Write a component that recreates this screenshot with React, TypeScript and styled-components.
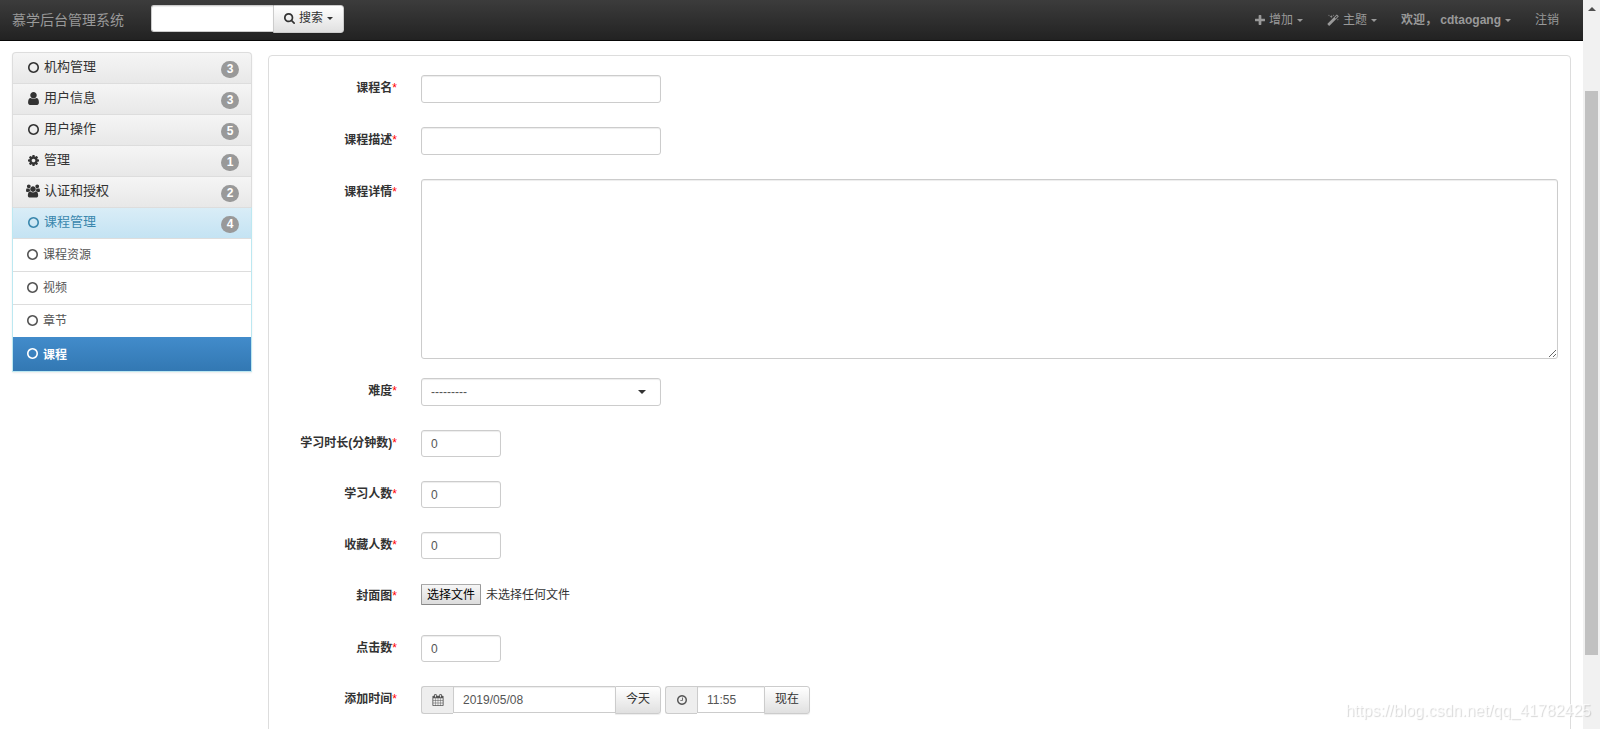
import React, { useId, useRef, useState } from "react";
import styled, { createGlobalStyle, css } from "styled-components";

const GlobalStyle = createGlobalStyle`
  *, *::before, *::after { box-sizing: border-box; }
  body {
    margin: 0;
    background: #fff;
    color: #333;
    font-family: "Liberation Sans", Arial, "Noto Sans CJK SC", sans-serif;
    font-size: 12px;
    line-height: 16px;
  }
  button, input, select, textarea { font: inherit; color: inherit; margin: 0; }
  a { color: inherit; text-decoration: none; }
`;

/* ---------- icons ---------- */

type IconName = "search" | "circle" | "user" | "cog" | "group" | "plus" | "magic" | "calendar" | "clock";

const icons: Record<IconName, { box: string; path: string }> = {
  search: {
    box: "64 128 1664 1664",
    path: "M1216 832q0-185-131.500-316.500t-316.500-131.500-316.500 131.500-131.500 316.500 131.500 316.500 316.500 131.500 316.500-131.500 131.500-316.500zm512 832q0 52-38 90t-90 38q-54 0-90-38l-343-342q-179 124-399 124-143 0-273.500-55.500t-225-150-150-225-55.500-273.500 55.500-273.500 150-225 225-150 273.500-55.500 273.500 55.500 225 150 150 225 55.500 273.500q0 220-124 399l343 343q37 37 37 90z",
  },
  circle: {
    box: "128 128 1536 1536",
    path: "M896 352q-148 0-273 73t-198 198-73 273 73 273 198 198 273 73 273-73 198-198 73-273-73-273-198-198-273-73zm768 544q0 209-103 385.500t-279.500 279.500-385.500 103-385.500-103-279.500-279.500-103-385.500 103-385.500 279.500-279.500 385.500-103 385.500 103 279.500 279.500 103 385.500z",
  },
  user: {
    box: "128 128 1536 1536",
    path: "M1536 1399q0 109-62.500 187t-150.500 78h-854q-88 0-150.500-78t-62.500-187q0-85 8.500-160.500t31.500-152 58.500-131 94-89 134.500-34.500q131 128 313 128t313-128q76 0 134.500 34.500t94 89 58.500 131 31.500 152 8.500 160.500zm-256-887q0 159-112.500 271.500t-271.500 112.500-271.500-112.500-112.500-271.500 112.500-271.500 271.500-112.500 271.500 112.500 112.500 271.500z",
  },
  cog: {
    box: "128 128 1536 1536",
    path: "M1152 896q0-106-75-181t-181-75-181 75-75 181 75 181 181 75 181-75 75-181zm512-109v222q0 12-8 23t-20 13l-185 28q-19 54-39 91 35 50 107 138 10 12 10 25t-9 23q-27 37-99 108t-94 71q-12 0-26-9l-138-108q-44 23-91 38-16 136-29 186-7 28-36 28h-222q-14 0-24.500-8.500t-11.500-21.500l-28-184q-49-16-90-37l-141 107q-10 9-25 9-14 0-25-11-126-114-165-168-7-10-7-23 0-12 8-23 15-21 51-66.500t54-70.500q-27-50-41-99l-183-27q-13-2-21-12.500t-8-23.500v-222q0-12 8-23t19-13l186-28q14-46 39-92-40-57-107-138-10-12-10-24 0-10 9-23 26-36 98.500-107.500t94.500-71.500q13 0 26 10l138 107q44-23 91-38 16-136 29-186 7-28 36-28h222q14 0 24.500 8.500t11.500 21.500l28 184q49 16 90 37l142-107q9-9 24-9 13 0 25 10 129 119 165 170 7 8 7 22 0 12-8 23-15 21-51 66.500t-54 70.500q26 50 41 98l183 28q13 2 21 12.500t8 23.500z",
  },
  group: {
    box: "0 0 1920 1792",
    path: "M593 896q-162 5-265 128h-134q-82 0-138-40.500t-56-118.500q0-353 124-353 6 0 43.500 21t97.500 42.500 119 21.500q67 0 133-23-5 37-5 66 0 139 81 256zm1071 637q0 120-73 189.500t-194 69.500h-874q-121 0-194-69.500t-73-189.500q0-53 3.500-103.500t14-109 26.500-108.500 43-97.500 62-81 85.500-53.500 111.500-20q10 0 43 21.500t73 48 107 48 135 21.500 135-21.500 107-48 73-48 43-21.500q61 0 111.500 20t85.500 53.500 62 81 43 97.500 26.500 108.500 14 109 3.500 103.500zm-1024-1277q0 106-75 181t-181 75-181-75-75-181 75-181 181-75 181 75 75 181zm704 384q0 159-112.500 271.500t-271.500 112.500-271.500-112.500-112.500-271.500 112.500-271.500 271.500-112.500 271.500 112.500 112.500 271.500zm576 225q0 78-56 118.500t-138 40.500h-134q-103-123-265-128 81-117 81-256 0-29-5-66 66 23 133 23 59 0 119-21.500t97.500-42.500 43.500-21q124 0 124 353zm-128-609q0 106-75 181t-181 75-181-75-75-181 75-181 181-75 181 75 75 181z",
  },
  plus: {
    box: "192 128 1408 1408",
    path: "M1600 736v192q0 40-28 68t-68 28h-416v416q0 40-28 68t-68 28h-192q-40 0-68-28t-28-68v-416h-416q-40 0-68-28t-28-68v-192q0-40 28-68t68-28h416v-416q0-40 28-68t68-28h192q40 0 68 28t28 68v416h416q40 0 68 28t28 68z",
  },
  magic: {
    box: "0 0 1664 1720",
    path: "M1190 638l293-293-107-107-293 293zm447-293q0 27-18 45l-1286 1286q-18 18-45 18t-45-18l-198-198q-18-18-18-45t18-45l1286-1286q18-18 45-18t45 18l198 198q18 18 18 45zm-1351-190l98 30-98 30-30 98-30-98-98-30 98-30 30-98zm350 162l196 60-196 60-60 196-60-196-196-60 196-60 60-196zm930 478l98 30-98 30-30 98-30-98-98-30 98-30 30-98zm-640-640l98 30-98 30-30 98-30-98-98-30 98-30 30-98z",
  },
  calendar: {
    box: "64 0 1664 1792",
    path: "M192 1664h288v-288h-288v288zm352 0h320v-288h-320v288zm-352-352h288v-320h-288v320zm352 0h320v-320h-320v320zm-352-384h288v-288h-288v288zm736 736h320v-288h-320v288zm-384-736h320v-288h-320v288zm768 736h288v-288h-288v288zm-384-352h320v-320h-320v320zm-352-864v-288q0-13-9.500-22.500t-22.500-9.500h-64q-13 0-22.500 9.500t-9.500 22.500v288q0 13 9.500 22.500t22.500 9.500h64q13 0 22.500-9.500t9.500-22.500zm736 864h288v-320h-288v320zm-384-384h320v-288h-320v288zm384 0h288v-288h-288v288zm32-480v-288q0-13-9.500-22.500t-22.500-9.500h-64q-13 0-22.500 9.500t-9.500 22.500v288q0 13 9.500 22.500t22.500 9.500h64q13 0 22.500-9.500t9.500-22.500zm384-64v1280q0 52-38 90t-90 38h-1408q-52 0-90-38t-38-90v-1280q0-52 38-90t90-38h128v-96q0-66 47-113t113-47h64q66 0 113 47t47 113v96h384v-96q0-66 47-113t113-47h64q66 0 113 47t47 113v96h128q52 0 90 38t38 90z",
  },
  clock: {
    box: "128 128 1536 1536",
    path: "M1024 544v448q0 14-9 23t-23 9h-320q-14 0-23-9t-9-23v-64q0-14 9-23t23-9h224v-352q0-14 9-23t23-9h64q14 0 23 9t9 23zm416 352q0-148-73-273t-198-198-273-73-273 73-198 198-73 273 73 273 198 198 273 73 273-73 198-198 73-273zm224 0q0 209-103 385.500t-279.500 279.500-385.500 103-385.500-103-279.500-279.500-103-385.500 103-385.500 279.500-279.500 385.500-103 385.500 103 279.500 279.500 103 385.500z",
  },
};

const Svg = styled.svg`
  display: block;
  flex: none;
  fill: currentColor;
`;

function Icon({ name, size }: { name: IconName; size: number }) {
  return (
    <Svg width={size} height={size} viewBox={icons[name].box} aria-hidden="true">
      <path d={icons[name].path} />
    </Svg>
  );
}

const Caret = styled.span<{ $size?: number }>`
  flex: none;
  width: 0;
  height: 0;
  border: ${(p) => p.$size ?? 3}px solid transparent;
  border-top-color: currentColor;
  border-bottom: 0;
`;

/* ---------- frame ---------- */

const Frame = styled.div`
  display: flex;
  height: 100vh;
  overflow: hidden;
`;

const Viewport = styled.div`
  flex: 1;
  min-width: 0;
  display: flex;
  flex-direction: column;
  overflow: hidden;
`;

const ScrollBar = styled.div`
  flex: none;
  width: 17px;
  padding: 0 2px;
  background: #f1f1f1;
  display: flex;
  flex-direction: column;
`;

const ScrollArrow = styled.div`
  height: 17px;
  display: flex;
  align-items: center;
  justify-content: center;
  &::before {
    content: "";
    border: 4px solid transparent;
    border-top: 0;
    border-bottom-color: #505050;
  }
`;

const ScrollGap = styled.div`
  flex: 74;
`;

const ScrollThumb = styled.div`
  flex: 564;
  background: #c1c1c1;
`;

/* ---------- top bar ---------- */

const TopBar = styled.header`
  flex: none;
  display: flex;
  align-items: flex-start;
  height: 41px;
  padding: 0 12px;
  background: linear-gradient(#3c3c3c, #222);
  border-bottom: 1px solid #080808;
  color: #999;
`;

const Brand = styled.a`
  font-size: 14px;
  line-height: 40px;
  margin-right: 27px;
  white-space: nowrap;
`;

const SearchForm = styled.form`
  display: flex;
  align-items: flex-start;
  padding-top: 5px;
`;

const SearchInput = styled.input`
  width: 122px;
  height: 27px;
  padding: 4px 8px;
  border: 1px solid #ccc;
  border-right: 0;
  border-radius: 3px 0 0 3px;
  background: #fff;
  color: #555;
  box-shadow: inset 0 1px 1px rgba(0, 0, 0, 0.075);
`;

const Button = styled.button`
  display: flex;
  align-items: center;
  justify-content: center;
  gap: 4px;
  height: 28px;
  padding: 0 10px 2px;
  border: 1px solid #ccc;
  border-radius: 0 3px 3px 0;
  background: linear-gradient(#fff, #e0e0e0);
  color: #333;
  white-space: nowrap;
  box-shadow: 0 1px 1px rgba(0, 0, 0, 0.075);
`;

const UserNav = styled.nav`
  display: flex;
  margin-left: auto;
`;

const NavLink = styled.a<{ $strong?: boolean }>`
  display: flex;
  align-items: center;
  gap: 4px;
  height: 40px;
  padding: 0 12px;
  font-weight: ${(p) => (p.$strong ? "bold" : "normal")};
  white-space: nowrap;
`;

/* ---------- side menu ---------- */

const Body = styled.div`
  flex: 1;
  min-height: 0;
  display: flex;
  align-items: flex-start;
  padding: 11px 12px 0;
`;

const SideMenu = styled.nav`
  flex: none;
  width: 240px;
  margin-right: 16px;
  border-radius: 4px 4px 0 0;
  box-shadow: 0 1px 2px rgba(0, 0, 0, 0.075);
`;

const Group = styled.a<{ $open?: boolean }>`
  display: flex;
  align-items: center;
  height: 31px;
  padding: 0 12px 0 14px;
  border: 1px solid #ddd;
  border-bottom: 0;
  background: linear-gradient(#f5f5f5, #e8e8e8);
  font-size: 13px;
  &:first-child {
    border-radius: 4px 4px 0 0;
  }
  ${(p) =>
    p.$open &&
    css`
      border-color: #ddd #bce8f1;
      background: linear-gradient(#d9edf7, #c4e3f3);
      color: #3a87ad;
    `}
`;

const IconSlot = styled.span`
  flex: none;
  display: flex;
  justify-content: center;
  width: 12px;
  margin-right: 5px;
  padding-bottom: 2px;
`;

const GroupTitle = styled.span`
  flex: 1;
  padding-bottom: 2px;
`;

const Badge = styled.span`
  width: 18px;
  height: 17px;
  margin-top: 2px;
  border-radius: 9px;
  background: #999;
  color: #fff;
  font-size: 12px;
  font-weight: bold;
  line-height: 17px;
  text-align: center;
`;

const SubList = styled.div`
  border: 1px solid #bce8f1;
  border-top: 0;
`;

const SubItem = styled.a<{ $current?: boolean }>`
  display: flex;
  align-items: center;
  height: 33px;
  padding: 0 13px;
  border-top: 1px solid #ddd;
  color: #555;
  ${(p) =>
    p.$current &&
    css`
      height: 34px;
      border-top-color: #428bca;
      background: linear-gradient(#428bca, #3278b3);
      color: #fff;
      font-weight: bold;
    `}
`;

/* ---------- form ---------- */

const Panel = styled.form`
  flex: 1;
  min-width: 0;
  margin-top: 3px;
  padding: 19px 12px 24px;
  border: 1px solid #ddd;
  border-radius: 4px;
  background: #fff;
`;

const Row = styled.div<{ $tight?: boolean }>`
  display: flex;
  align-items: flex-start;
  margin-bottom: ${(p) => (p.$tight ? 19 : 24)}px;
`;

const Label = styled.label`
  flex: none;
  width: 116px;
  margin-right: 24px;
  font-weight: bold;
  line-height: 27px;
  text-align: right;
  white-space: nowrap;
`;

const Star = styled.span`
  color: #f00;
  font-weight: normal;
`;

const field = css`
  padding: 4px 9px;
  border: 1px solid #ccc;
  border-radius: 3px;
  background: #fff;
  color: #555;
  box-shadow: inset 0 1px 1px rgba(0, 0, 0, 0.075);
`;

const TextInput = styled.input`
  ${field}
  width: 240px;
  height: 28px;
`;

const NumberInput = styled.input`
  ${field}
  width: 80px;
  height: 27px;
`;

const TextArea = styled.textarea`
  ${field}
  flex: 1;
  min-width: 0;
  height: 180px;
`;

const SelectWrap = styled.div`
  position: relative;
  width: 240px;
`;

const Select = styled.select`
  ${field}
  appearance: none;
  display: block;
  width: 100%;
  height: 28px;
`;

const SelectCaret = styled(Caret)`
  position: absolute;
  top: 12px;
  right: 15px;
  pointer-events: none;
`;

const FileBox = styled.div`
  display: flex;
  align-items: center;
  gap: 5px;
  height: 28px;
  padding-bottom: 5px;
`;

const FileButton = styled.button`
  height: 21px;
  width: 60px;
  padding: 0;
  border: 1px solid #999;
  border-color: #aaa #999 #888;
  border-radius: 1px;
  background: linear-gradient(#f6f6f6, #dcdcdc);
  color: #000;
  line-height: 16px;
`;

const HiddenFile = styled.input`
  display: none;
`;

const DateTime = styled.div`
  display: flex;
  gap: 4px;
`;

const InputGroup = styled.div`
  display: flex;
  align-items: flex-start;
`;

const AddOn = styled.span`
  display: flex;
  align-items: center;
  justify-content: center;
  width: 32px;
  height: 28px;
  border: 1px solid #ccc;
  border-right: 0;
  border-radius: 3px 0 0 3px;
  background: #eee;
  color: #555;
`;

const GroupInput = styled.input<{ $width: number }>`
  ${field}
  width: ${(p) => p.$width}px;
  height: 27px;
  border-right: 0;
  border-radius: 0;
`;

/* ---------- watermark ---------- */

const Watermark = styled.div`
  position: fixed;
  right: 9px;
  bottom: 8px;
  color: rgba(255, 255, 255, 0.7);
  font-size: 16px;
  line-height: 20px;
  text-shadow: 1px 1px 1px rgba(0, 0, 0, 0.16);
  pointer-events: none;
`;

/* ---------- content ---------- */

const groups: { icon: IconName; title: string; count: number; open?: boolean }[] = [
  { icon: "circle", title: "机构管理", count: 3 },
  { icon: "user", title: "用户信息", count: 3 },
  { icon: "circle", title: "用户操作", count: 5 },
  { icon: "cog", title: "管理", count: 1 },
  { icon: "group", title: "认证和授权", count: 2 },
  { icon: "circle", title: "课程管理", count: 4, open: true },
];

const subItems = ["课程资源", "视频", "章节", "课程"];

function Field({
  label,
  tight,
  children,
}: {
  label: string;
  tight?: boolean;
  children: (id: string) => React.ReactNode;
}) {
  const id = useId();
  return (
    <Row $tight={tight}>
      <Label htmlFor={id}>
        {label}
        <Star>*</Star>
      </Label>
      {children(id)}
    </Row>
  );
}

function FileField({ id }: { id: string }) {
  const input = useRef<HTMLInputElement>(null);
  const [name, setName] = useState("未选择任何文件");
  return (
    <FileBox>
      <FileButton type="button" onClick={() => input.current?.click()}>
        选择文件
      </FileButton>
      <span>{name}</span>
      <HiddenFile
        id={id}
        ref={input}
        type="file"
        onChange={(e) => setName(e.target.files?.[0]?.name ?? "未选择任何文件")}
      />
    </FileBox>
  );
}

export default function App() {
  return (
    <>
      <GlobalStyle />
      <Frame>
        <Viewport>
          <TopBar>
            <Brand href="#">慕学后台管理系统</Brand>
            <SearchForm>
              <SearchInput type="text" aria-label="搜索" />
              <Button type="button">
                <Icon name="search" size={11} />
                搜索
                <Caret />
              </Button>
            </SearchForm>
            <UserNav>
              <NavLink href="#">
                <Icon name="plus" size={10} />
                增加
                <Caret />
              </NavLink>
              <NavLink href="#">
                <Icon name="magic" size={12} />
                主题
                <Caret />
              </NavLink>
              <NavLink href="#" $strong>
                欢迎， cdtaogang
                <Caret />
              </NavLink>
              <NavLink href="#">注销</NavLink>
            </UserNav>
          </TopBar>
          <Body>
            <SideMenu>
              {groups.map((g) => (
                <Group key={g.title} href="#" $open={g.open}>
                  <IconSlot>
                    <Icon name={g.icon} size={g.icon === "group" ? 14 : g.icon === "user" ? 13 : 11} />
                  </IconSlot>
                  <GroupTitle>{g.title}</GroupTitle>
                  <Badge>{g.count}</Badge>
                </Group>
              ))}
              <SubList>
                {subItems.map((title) => (
                  <SubItem key={title} href="#" $current={title === "课程"}>
                    <IconSlot>
                      <Icon name="circle" size={11} />
                    </IconSlot>
                    {title}
                  </SubItem>
                ))}
              </SubList>
            </SideMenu>
            <Panel>
              <Field label="课程名">{(id) => <TextInput id={id} type="text" />}</Field>
              <Field label="课程描述">{(id) => <TextInput id={id} type="text" />}</Field>
              <Field label="课程详情" tight>
                {(id) => <TextArea id={id} />}
              </Field>
              <Field label="难度">
                {(id) => (
                  <SelectWrap>
                    <Select id={id}>
                      <option>---------</option>
                    </Select>
                    <SelectCaret $size={4} />
                  </SelectWrap>
                )}
              </Field>
              {["学习时长(分钟数)", "学习人数", "收藏人数"].map((label) => (
                <Field key={label} label={label}>
                  {(id) => <NumberInput id={id} type="text" defaultValue="0" />}
                </Field>
              ))}
              <Field label="封面图">{(id) => <FileField id={id} />}</Field>
              <Field label="点击数">{(id) => <NumberInput id={id} type="text" defaultValue="0" />}</Field>
              <Field label="添加时间">
                {(id) => (
                  <DateTime>
                    <InputGroup>
                      <AddOn>
                        <Icon name="calendar" size={12} />
                      </AddOn>
                      <GroupInput id={id} type="text" defaultValue="2019/05/08" $width={162} />
                      <Button type="button">今天</Button>
                    </InputGroup>
                    <InputGroup>
                      <AddOn>
                        <Icon name="clock" size={10} />
                      </AddOn>
                      <GroupInput type="text" aria-label="时间" defaultValue="11:55" $width={67} />
                      <Button type="button">现在</Button>
                    </InputGroup>
                  </DateTime>
                )}
              </Field>
            </Panel>
          </Body>
        </Viewport>
        <ScrollBar aria-hidden="true">
          <ScrollArrow />
          <ScrollGap />
          <ScrollThumb />
          <ScrollGap />
        </ScrollBar>
      </Frame>
      <Watermark>https://blog.csdn.net/qq_41782425</Watermark>
    </>
  );
}
